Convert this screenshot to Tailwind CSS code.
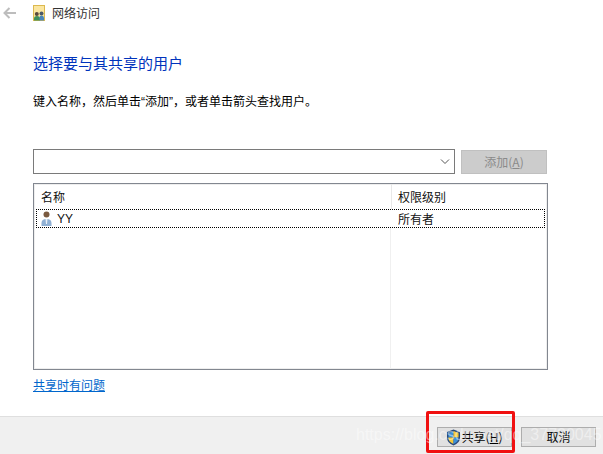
<!DOCTYPE html>
<html lang="zh-CN">

<head>
  <meta charset="UTF-8" />
  <title>网络访问</title>
  <script src="https://cdn.jsdelivr.net/npm/@tailwindcss/browser@4"></script>
</head>

<body class="bg-white font-['Noto_Sans_CJK_SC','Liberation_Sans',sans-serif]">
  <div class="relative w-[603px] h-[454px] overflow-hidden flex flex-col text-[12px] text-black">

    <!-- Title bar -->
    <header class="h-[26px] flex items-center">
      <svg class="ml-[3px] w-[13px] h-[12px]" viewBox="0 0 13 12" fill="none" stroke="#bdbdbd" stroke-width="2">
        <path d="M13 6H2M6.500 1 1.500 6l5 5" />
      </svg>
      <svg class="ml-[17px] w-[12px] h-[16px]" viewBox="0 0 12 16">
        <rect x="0.500" y="0.500" width="11" height="15" fill="#fbe6a0" stroke="#dcb94f" />
        <circle cx="3.800" cy="9" r="2" fill="#5a4a3c" />
        <circle cx="8.500" cy="8.500" r="2" fill="#4d5a68" />
        <path d="M1 15.500v-2q0-2.500 3-2.500t3 2.500v2z" fill="#3f8f5a" />
        <path d="M6.500 15.500v-3q0-2 2-2t2.500 2v3z" fill="#4a86b8" />
      </svg>
      <span class="ml-[7px] text-[#333]">网络访问</span>
    </header>

    <!-- Content -->
    <main class="flex-1 pl-[33px] pr-[55px] flex flex-col">
      <h1 class="mt-[27px] h-[20px] leading-[20px] text-[15px] text-[#0033bc]">选择要与其共享的用户</h1>
      <p class="mt-[20px] h-[16px] leading-[16px] text-[12px] whitespace-nowrap">键入名称，然后单击<span class="font-['Liberation_Sans']">“</span>添加<span class="font-['Liberation_Sans']">”</span>，或者单击箭头查找用户。</p>

      <div class="mt-[40px] flex items-start">
        <div class="w-[422px] h-[25px] border border-[#7a7a7a] flex items-center justify-end pr-[4px]">
          <svg class="w-[10px] h-[6px]" viewBox="0 0 10 6" fill="none" stroke="#555" stroke-width="1">
            <path d="M1 .5l4 4 4-4" />
          </svg>
        </div>
        <button class="ml-[6px] mt-[1px] w-[86px] h-[24px] bg-[#cccccc] border border-[#c0c0c0] text-[#8a8a8a]">添加(<span class="underline">A</span>)</button>
      </div>

      <!-- User list -->
      <div class="mt-[9px] w-[515px] h-[187px] border border-[#828790] shadow-[inset_1px_1px_0_#eeeeee,inset_-1px_-1px_0_#eeeeee] flex flex-col">
        <div class="h-[25px] flex items-center text-[#111]">
          <span class="pl-[7px] w-[357px]">名称</span>
          <span class="pl-[6px] h-full flex items-center border-l border-[#e8e8e8]">权限级别</span>
        </div>
        <div class="ml-[2px] h-[19px] w-[509px] border border-dotted border-black flex items-center">
          <svg class="ml-[3px] w-[13px] h-[15px]" viewBox="0 0 13 15">
            <circle cx="6.500" cy="3.500" r="3" fill="#7a5a40" />
            <path d="M1.500 15v-3q0-4 5-4t5 4v3z" fill="#8fb0d4" />
            <path d="M5.500 8h2l-.5 5h-1z" fill="#e8eef5" />
          </svg>
          <span class="ml-[4px] text-[#111] text-[12px] font-['Liberation_Sans']">YY</span>
          <span class="ml-[325px] text-[#111]">所有者</span>
        </div>
        <div class="flex-1 flex">
          <div class="w-[356px]"></div>
          <div class="border-l border-[#f0f0f0]"></div>
        </div>
      </div>

      <a class="mt-[7px] h-[16px] leading-[16px] self-start text-[#0066cc] underline">共享时有问题</a>
    </main>

    <!-- Footer -->
    <footer class="h-[38px] bg-[#f0f0f0] border-t border-[#dfdfdf] flex justify-end items-start pt-[10px] pr-[7px] gap-[9px]">
      <button class="w-[75px] h-[20px] bg-[#e1e1e1] border border-[#adadad] flex items-center justify-center">
        <svg class="w-[15px] h-[17px] -ml-[1px]" viewBox="0 0 15 17">
          <path d="M7.500.5 14 3v6q0 5-6.500 7.500Q1 14 1 9V3z" fill="#2a4a7a" />
          <path d="M7.500 2 2.500 4v4.500h5z" fill="#3b8fd8" />
          <path d="M7.500 2l5 2v4.500h-5z" fill="#f5c93a" />
          <path d="M2.500 8.500h5V15q-5-2-5-6.500z" fill="#f5c93a" />
          <path d="M7.500 8.500h5q0 4.500-5 6.500z" fill="#3b8fd8" />
        </svg>
        <span class="ml-[1px]">共享(<span class="underline">H</span>)</span>
      </button>
      <button class="w-[75px] h-[20px] bg-[#e1e1e1] border border-[#adadad]">取消</button>
    </footer>

    <!-- Red annotation -->
    <div class="absolute left-[426px] top-[411px] w-[89px] h-[42px] border-[3px] border-[#f01010] rounded-[2px]"></div>

    <!-- Watermark -->
    <div class="absolute left-[356px] top-[425px] text-[16px] leading-[20px] text-white/45 whitespace-nowrap font-['Liberation_Sans']">https://blog.csdn.net/qq_37730045</div>
  </div>
</body>

</html>
